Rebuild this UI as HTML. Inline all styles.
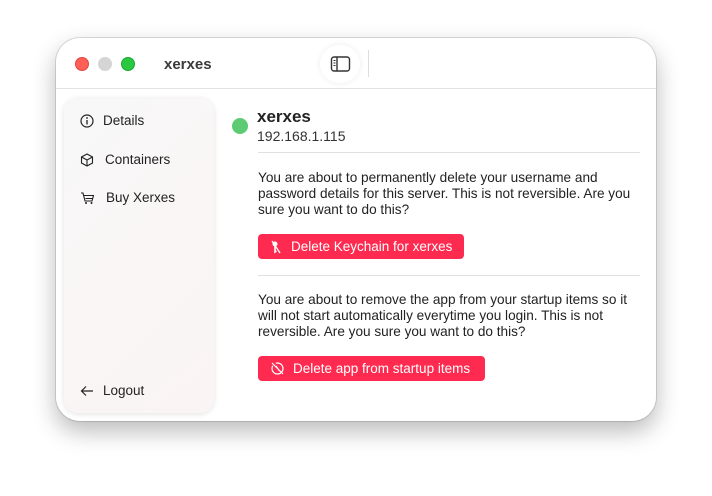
<!DOCTYPE html>
<html><head><style>
*{margin:0;padding:0;box-sizing:border-box}
body{width:712px;height:496px;background:#fff;font-family:"Liberation Sans",sans-serif;position:relative;overflow:hidden}
.win{position:absolute;left:56px;top:38px;width:600px;height:383px;background:#fff;border-radius:24px;box-shadow:0 10px 24px rgba(0,0,0,.28),0 0 0 1px rgba(0,0,0,.12);overflow:hidden}
.tb{position:absolute;left:0;top:0;width:600px;height:51px;border-bottom:1px solid #e2e2e2}
.dot{position:absolute;top:19px;width:14px;height:14px;border-radius:50%}
.title{position:absolute;left:108px;top:18px;font-size:15px;font-weight:bold;color:#3a3a3a}
.tog{position:absolute;left:264px;top:7px;width:40px;height:38px;border-radius:19px;background:#fff;box-shadow:0 0 6px rgba(0,0,0,.08)}
.sep{position:absolute;left:312px;top:12px;width:1px;height:27px;background:#ddd}
.side{position:absolute;left:8px;top:60px;width:150px;height:315px;border-radius:14px;background:linear-gradient(135deg,#f8f8f8,#fbf4f4);box-shadow:0 1px 6px rgba(0,0,0,.12)}
.it{position:absolute;left:16px;font-size:13.5px;color:#222;display:flex;align-items:center;gap:9px;white-space:nowrap}
.main{position:absolute;left:176px;top:0;width:424px;height:383px}
.p{position:absolute;left:26px;width:386px;font-size:13.6px;line-height:16px;color:#222}
.btn{position:absolute;left:26px;height:25px;background:#ff2a4f;border-radius:4px;color:#fff;font-size:13.5px;display:flex;align-items:center;padding:0 12px 0 11px;gap:8px;white-space:nowrap}
.hr{position:absolute;left:26px;width:382px;height:1px;background:#e0e0e0}
</style></head><body>
<div class="win">
 <div class="tb">
  <div class="dot" style="left:19px;background:#fe5f57;border:1px solid #e2463f"></div>
  <div class="dot" style="left:42px;background:#d5d5d5"></div>
  <div class="dot" style="left:65px;background:#28c840;border:1px solid #1aab29"></div>
  <div class="title">xerxes</div>
  <div class="tog"><svg width="40" height="38" viewBox="0 0 40 38"><rect x="11.5" y="12" width="18" height="14" rx="2.5" fill="none" stroke="#333" stroke-width="1.4"/><line x1="17" y1="12" x2="17" y2="26" stroke="#333" stroke-width="1.4"/><line x1="13.5" y1="15.5" x2="15.5" y2="15.5" stroke="#333"/><line x1="13.5" y1="18" x2="15.5" y2="18" stroke="#333"/><line x1="13.5" y1="20.5" x2="15.5" y2="20.5" stroke="#333"/></svg></div>
  <div class="sep"></div>
 </div>
 <div class="side">
  <div class="it" style="top:15px"><svg width="14" height="14"><circle cx="7" cy="7" r="6" fill="none" stroke="#222" stroke-width="1.2"/><line x1="7" y1="6" x2="7" y2="10.5" stroke="#222" stroke-width="1.3"/><circle cx="7" cy="4" r=".9" fill="#222"/></svg>Details</div>
  <div class="it" style="top:54px;gap:11px"><svg width="14" height="14"><path d="M7 1L12.5 4V10L7 13L1.5 10V4Z M1.5 4L7 7L12.5 4 M7 7V13" fill="none" stroke="#222" stroke-width="1.1"/></svg>Containers</div>
  <div class="it" style="top:92px;gap:11px"><svg width="15" height="14"><path d="M1 2H3L5 10H12L13.5 4.5H4 M5.5 7.5H13" fill="none" stroke="#222" stroke-width="1.1"/><circle cx="6" cy="12" r="1" fill="#222"/><circle cx="11.5" cy="12" r="1" fill="#222"/></svg>Buy Xerxes</div>
  <div class="it" style="top:285px"><svg width="14" height="12"><path d="M13 6H2 M6 1.5L1.5 6L6 10.5" fill="none" stroke="#222" stroke-width="1.2"/></svg>Logout</div>
 </div>
 <div class="main">
  <div style="position:absolute;left:0;top:80px;width:16px;height:16px;border-radius:50%;background:#5ccb71"></div>
  <div style="position:absolute;left:25px;top:69px;font-size:17px;font-weight:bold;color:#222">xerxes</div>
  <div style="position:absolute;left:25px;top:90px;font-size:14px;color:#333">192.168.1.115</div>
  <div class="hr" style="top:114px"></div>
  <div class="p" style="top:132px">You are about to permanently delete your username and password details for this server. This is not reversible. Are you sure you want to do this?</div>
  <div class="btn" style="top:196px"><svg width="14" height="16"><path d="M3 2L11 14" stroke="#fff" stroke-width="1.3"/><circle cx="6" cy="5" r="2.5" fill="#fff"/><path d="M6 7V13L7.5 12" stroke="#fff" stroke-width="1.6" fill="none"/></svg>Delete Keychain for xerxes</div>
  <div class="hr" style="top:237px"></div>
  <div class="p" style="top:254px">You are about to remove the app from your startup items so it will not start automatically everytime you login. This is not reversible. Are you sure you want to do this?</div>
  <div class="btn" style="top:318px;padding-left:12px;padding-right:15px"><svg width="15" height="15"><circle cx="7.5" cy="7.5" r="5.5" fill="none" stroke="#fff" stroke-width="1.2" stroke-dasharray="20 4"/><path d="M2 2L13 13 M6 5L9.5 10" stroke="#fff" stroke-width="1.2"/></svg>Delete app from startup items</div>
 </div>
</div>
</body></html>
